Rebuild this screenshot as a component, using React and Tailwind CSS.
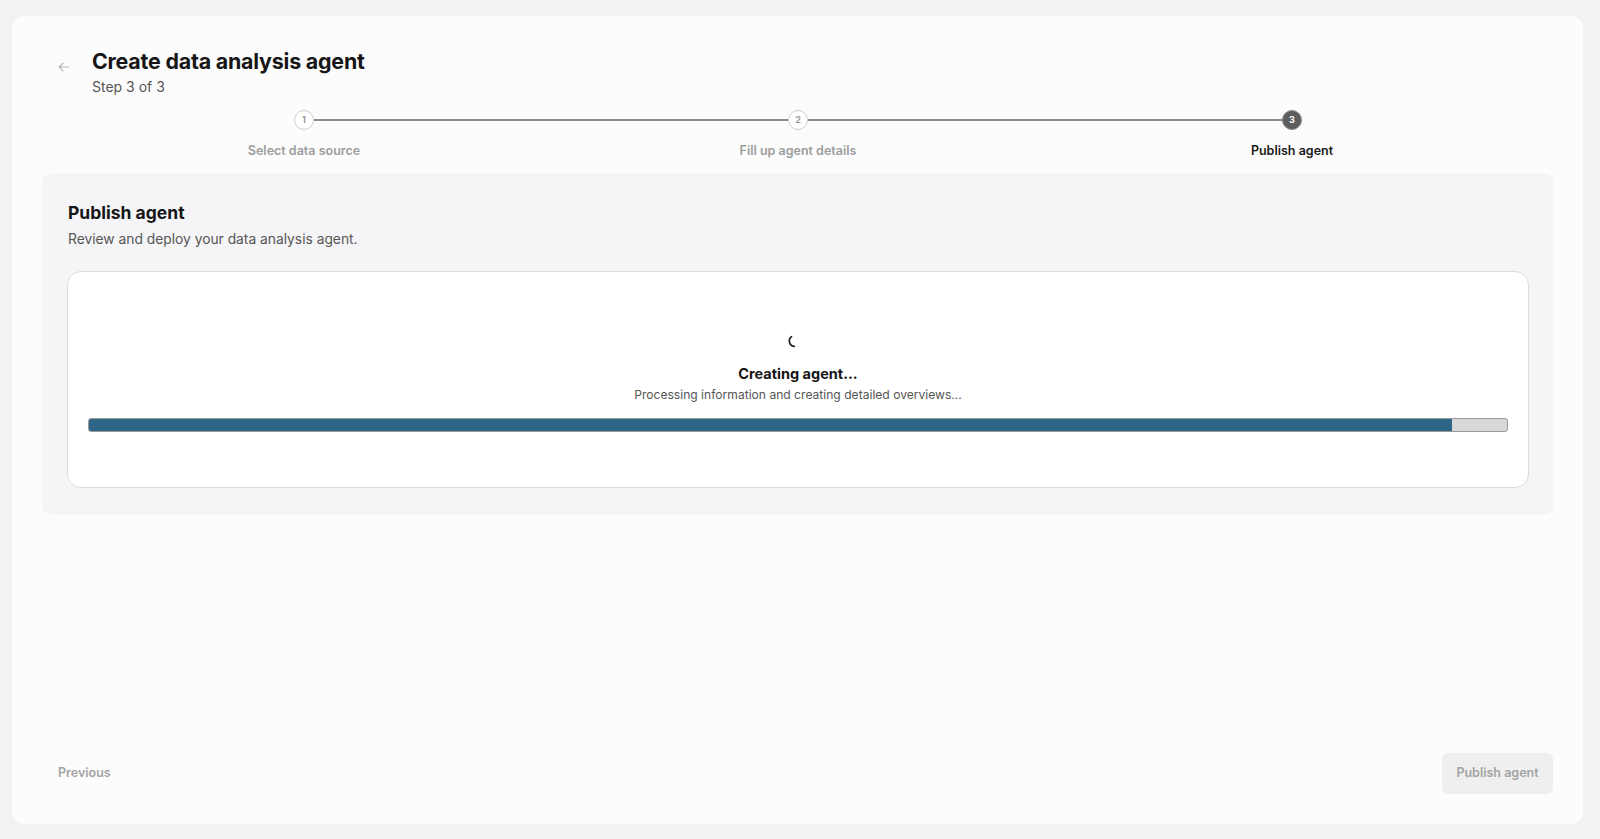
import React from "react";

const steps = [
  { n: 1, label: "Select data source" },
  { n: 2, label: "Fill up agent details" },
  { n: 3, label: "Publish agent" },
];

function Stepper({ current }) {
  return (
    <div className="mx-[14px] grid grid-cols-3">
      {steps.map((s, i) => {
        const active = s.n === current;
        return (
          <div key={s.n} className="flex flex-col items-center">
            <div className="flex w-full items-center">
              <div className={`h-[2px] flex-1 ${i === 0 ? "bg-transparent" : "bg-[#8c8c8c]"}`} />
              <div
                className={`flex h-[20px] w-[20px] items-center justify-center rounded-full text-[9px] font-bold ${
                  active
                    ? "bg-[#5e5e5e] text-white border border-[#8a8a8a]"
                    : "bg-white text-[#9b9b9b] border-[1.5px] border-[#cfcfcf]"
                }`}
              >
                {s.n}
              </div>
              <div className={`h-[2px] flex-1 ${i === steps.length - 1 ? "bg-transparent" : "bg-[#8c8c8c]"}`} />
            </div>
            <div
              className={`mt-[13px] text-[12.5px] font-semibold leading-4 ${
                active ? "text-[#1a1a1a]" : "text-[#9d9d9d]"
              }`}
            >
              {s.label}
            </div>
          </div>
        );
      })}
    </div>
  );
}

export default function App() {
  return (
    <div
      className="flex h-screen w-full bg-[#f2f2f2] pl-3 pr-[17px] pt-4 pb-[15px]"
      style={{ fontFamily: "Inter, 'Noto Sans', sans-serif" }}
    >
      <div className="flex flex-1 flex-col rounded-xl bg-[#fcfcfc] pl-[32px] pr-[30px] pb-[30px]">
        {/* Header */}
        <div className="flex items-start pl-[14px] pt-[31px]">
          <button className="mt-[15px] text-[#b5b5b5]" aria-label="Back">
            <svg width="12" height="10" viewBox="0 0 12 10" fill="none">
              <path d="M11 5H1.5M5 1.2L1.2 5L5 8.8" stroke="currentColor" strokeWidth="1.1" strokeLinecap="round" strokeLinejoin="round" />
            </svg>
          </button>
          <div className="ml-[22px]">
            <h1 className="text-[21.4px] font-bold leading-7 tracking-[-0.2px] text-[#161616]">
              Create data analysis agent
            </h1>
            <p className="mt-[2px] text-[14px] leading-5 text-[#555]">Step 3 of 3</p>
          </div>
        </div>

        <div className="-ml-px mt-[13px]">
          <Stepper current={3} />
        </div>

        {/* Panel */}
        <div className="-ml-px mt-[15px] rounded-lg bg-[#f5f5f7] p-6 pt-[27px] shadow-[0_1px_3px_rgba(0,0,0,0.06)]">
          <h2 className="ml-px text-[17.5px] font-bold leading-6 text-[#161616]">Publish agent</h2>
          <p className="ml-px mt-[4px] text-[13.8px] leading-5 text-[#555]">Review and deploy your data analysis agent.</p>

          <div className="mt-[22px] rounded-[14px] border border-[#dcdcdc] bg-white px-5 pb-[55px] pt-[62px]">
            <div className="flex flex-col items-center">
              <svg width="15" height="15" viewBox="0 0 14 14" fill="none" className="-ml-[8px]">
                <path d="M4.2 2.5A5 5 0 0 0 6.8 11.5" stroke="#1f1f1f" strokeWidth="1.6" strokeLinecap="round" />
              </svg>
              <div className="mt-[15px] text-[14.5px] font-bold leading-5 text-[#161616]">Creating agent...</div>
              <div className="mt-[3px] text-[12.1px] leading-4 text-[#555]">
                Processing information and creating detailed overviews...
              </div>
            </div>
            <div className="mt-[15px] h-[14px] w-full overflow-hidden rounded-[3px] border border-[#9a9a9a] bg-[#d8d8d8]">
              <div className="h-full w-[96.1%] bg-[#2d6586]" />
            </div>
          </div>
        </div>

        {/* Footer */}
        <div className="mt-auto flex items-center justify-between">
          <button className="pl-[14px] text-[12.5px] font-semibold text-[#a3a3a3]">Previous</button>
          <button className="h-[41px] w-[111px] rounded-md bg-[#efefef] text-[12.5px] font-semibold text-[#a3a3a3]">
            Publish agent
          </button>
        </div>
      </div>
    </div>
  );
}
